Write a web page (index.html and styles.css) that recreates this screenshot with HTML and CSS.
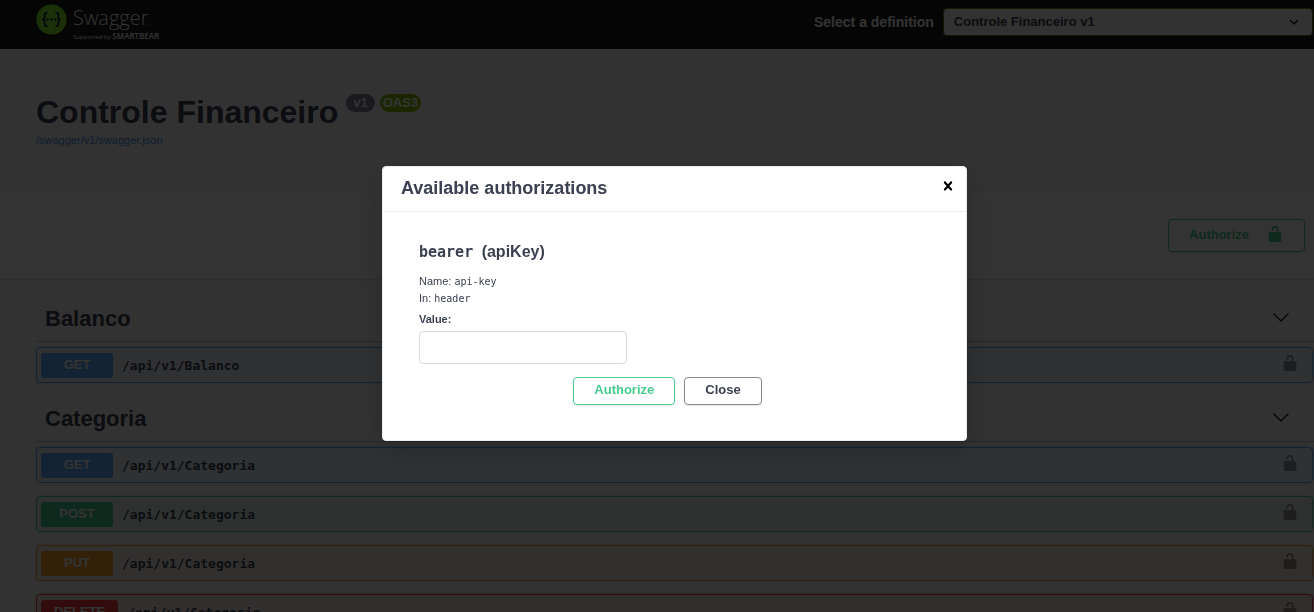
FILE: index.html
```html
<!DOCTYPE html>
<html lang="en">
<head>
<meta charset="utf-8">
<title>Swagger UI</title>
<link rel="stylesheet" href="styles.css">
</head>
<body>
<svg class="sprite" aria-hidden="true">
  <symbol id="unlocked" viewBox="0 0 20 20"><path d="M15.8 8H14V5.6C14 2.703 12.665 1 10 1 7.334 1 6 2.703 6 5.6V6h2v-.801C8 3.754 8.797 3 10 3c1.203 0 2 .754 2 2.199V8H4c-.553 0-1 .646-1 1.199V17c0 .549.428 1.139.951 1.307l1.197.387C5.672 18.861 6.55 19 7.1 19h5.8c.549 0 1.428-.139 1.951-.307l1.196-.387c.524-.167.953-.757.953-1.306V9.199C17 8.646 16.352 8 15.8 8z"/></symbol>
  <symbol id="chevron" viewBox="0 0 20 20"><path d="M17.418 6.109c.272-.268.709-.268.979 0s.271.701 0 .969l-7.908 7.83c-.27.268-.707.268-.979 0l-7.908-7.83c-.27-.268-.27-.701 0-.969.271-.268.709-.268.979 0L10 13.25z"/></symbol>
  <symbol id="arrow" viewBox="0 0 20 20"><path d="M13.418 7.859c.271-.268.709-.268.978 0 .27.268.272.701 0 .969l-3.908 3.83c-.27.268-.707.268-.979 0l-3.908-3.83c-.27-.267-.27-.701 0-.969.271-.268.709-.268.978 0L10 11z"/></symbol>
  <symbol id="close" viewBox="0 0 20 20"><path d="M14.348 14.849c-.469.469-1.229.469-1.697 0L10 11.819l-2.651 3.029c-.469.469-1.229.469-1.697 0-.469-.469-.469-1.229 0-1.697l2.758-3.15-2.759-3.152c-.469-.469-.469-1.228 0-1.697.469-.469 1.228-.469 1.697 0L10 8.183l2.651-3.031c.469-.469 1.228-.469 1.697 0 .469.469.469 1.229 0 1.697l-2.758 3.152 2.758 3.15c.469.469.469 1.229 0 1.698z"/></symbol>
</svg>

<header class="topbar">
  <a class="logo" href="#">
    <svg class="logo-mark" viewBox="0 0 32 32" aria-hidden="true">
      <circle cx="16" cy="16" r="15.6" fill="#85ea2d"/>
      <g fill="none" stroke="#173647" stroke-width="1.9">
        <path d="M12 8.9c-2.300 0-3.100.6-3.100 2.400v2c0 1.800-.7 2.700-2.500 2.700 1.800 0 2.500.9 2.500 2.700v2c0 1.800.8 2.400 3.100 2.400"/>
        <path d="M20 8.900c2.300 0 3.100.6 3.100 2.400v2c0 1.800.7 2.700 2.500 2.700-1.800 0-2.500.9-2.500 2.700v2c0 1.800-.8 2.400-3.100 2.400"/>
      </g>
      <g fill="#173647"><circle cx="12" cy="16" r="1.300"/><circle cx="16" cy="16" r="1.300"/><circle cx="20" cy="16" r="1.300"/></g>
    </svg>
    <span class="logo-text">
      <span class="logo-name">Swagger<span class="logo-dot">.</span></span>
      <span class="logo-sub">Supported by <b>SMARTBEAR</b></span>
    </span>
  </a>
  <div class="definition">
    <label for="definition">Select a definition</label>
    <div class="select-wrap">
      <select id="definition"><option>Controle Financeiro v1</option></select>
      <svg class="select-arrow" aria-hidden="true"><use href="#arrow"/></svg>
    </div>
  </div>
</header>

<main>
  <section class="info">
    <div class="title-row">
      <h1>Controle Financeiro</h1>
      <div class="badges">
        <span class="badge">v1</span>
        <span class="badge badge-oas">OAS3</span>
      </div>
    </div>
    <a class="spec-link" href="#">/swagger/v1/swagger.json</a>
  </section>

  <section class="schemes">
    <button class="btn btn-authorize btn-main" type="button">Authorize <svg class="icon" aria-hidden="true"><use href="#unlocked"/></svg></button>
  </section>

  <div class="tags">
    <section class="tag">
      <h2>Balanco <svg class="icon" aria-hidden="true"><use href="#chevron"/></svg></h2>
      <div class="operations">
        <div class="op get"><span class="method">GET</span><span class="path">/api/v1/Balanco</span><button class="lock" type="button" aria-label="Authorization"><svg class="icon"><use href="#unlocked"/></svg></button></div>
      </div>
    </section>
    <section class="tag">
      <h2>Categoria <svg class="icon" aria-hidden="true"><use href="#chevron"/></svg></h2>
      <div class="operations">
        <div class="op get"><span class="method">GET</span><span class="path">/api/v1/Categoria</span><button class="lock" type="button" aria-label="Authorization"><svg class="icon"><use href="#unlocked"/></svg></button></div>
        <div class="op post"><span class="method">POST</span><span class="path">/api/v1/Categoria</span><button class="lock" type="button" aria-label="Authorization"><svg class="icon"><use href="#unlocked"/></svg></button></div>
        <div class="op put"><span class="method">PUT</span><span class="path">/api/v1/Categoria</span><button class="lock" type="button" aria-label="Authorization"><svg class="icon"><use href="#unlocked"/></svg></button></div>
        <div class="op delete"><span class="method">DELETE</span><span class="path">/api/v1/Categoria</span><button class="lock" type="button" aria-label="Authorization"><svg class="icon"><use href="#unlocked"/></svg></button></div>
      </div>
    </section>
  </div>
</main>

<div class="backdrop">
  <div class="modal" role="dialog" aria-modal="true" aria-labelledby="modal-title">
    <div class="modal-header">
      <h3 id="modal-title">Available authorizations</h3>
      <button class="modal-close" type="button" aria-label="Close dialog"><svg class="icon"><use href="#close"/></svg></button>
    </div>
    <form class="modal-body">
      <h4><code>bearer</code> (apiKey)</h4>
      <p>Name: <code>api-key</code></p>
      <p>In: <code>header</code></p>
      <label for="api-key">Value:</label>
      <input id="api-key" type="text">
      <div class="actions">
        <button class="btn btn-authorize" type="button">Authorize</button>
        <button class="btn" type="button">Close</button>
      </div>
    </form>
  </div>
</div>
</body>
</html>
```

FILE: styles.css
```css
* { box-sizing: border-box; }

body {
  margin: 0;
  overflow: hidden;
  background: #fafafa;
  color: #3b4151;
  font-family: "Liberation Sans", Arial, sans-serif;
}

h1, h2, h3, h4, p { margin: 0; }
a { text-decoration: none; }
button { font-family: inherit; cursor: pointer; }
code, .path { font-family: "DejaVu Sans Mono", monospace; }

.sprite { display: none; }
.icon { display: block; width: 18px; height: 18px; fill: currentColor; }

/* Top bar */
.topbar {
  display: flex;
  align-items: flex-start;
  justify-content: space-between;
  height: 49px;
  padding: 4px 1px 0 36px;
  background: #1b1b1b;
  color: #fff;
}
.logo { display: flex; gap: 6px; color: #fff; font-family: "Open Sans", sans-serif; }
.logo-mark { width: 31px; height: 31px; }
.logo-text { display: flex; flex-direction: column; padding-top: 3px; }
.logo-name { font-size: 20px; line-height: 22px; font-weight: 300; }
.logo-dot { font-size: 10px; }
.logo-sub { font-size: 6px; line-height: 8px; white-space: nowrap; }
.logo-sub b { font-size: 8px; font-weight: 600; }

.definition { display: flex; align-items: center; gap: 9px; width: 499px; padding-top: 4px; }
.definition label { flex: none; font-size: 14px; font-weight: 700; }
.select-wrap { position: relative; flex: 1; }
.definition select {
  display: block;
  width: 100%;
  height: 28px;
  padding: 0 36px 2px 10px;
  appearance: none;
  border: 1px solid #547f00;
  border-radius: 4px;
  background: #f7f7f7;
  color: #3b4151;
  font: 700 13px "Liberation Sans", Arial, sans-serif;
}
.select-arrow { position: absolute; top: 5px; right: 10px; width: 18px; height: 18px; pointer-events: none; }

/* API info */
.info { padding: 45px 0 45px 36px; }
.title-row { display: flex; align-items: flex-start; gap: 8px; }
h1 { font-size: 32px; line-height: 36px; }
.badges { display: flex; gap: 5px; }
.badge {
  height: 18px;
  padding: 0 7px;
  border-radius: 9px;
  background: #7d8492;
  color: #fff;
  font-size: 13px;
  line-height: 17px;
  font-weight: 700;
}
.badge-oas { padding: 0 3px; background: #89bf04; }
.spec-link { display: block; padding-top: 3px; color: #4990e2; font-size: 11px; line-height: 14px; }

.schemes {
  display: flex;
  justify-content: flex-end;
  padding: 27px 9px;
  background: #fff;
  box-shadow: 0 1px 2px rgba(0, 0, 0, .15);
}

.btn {
  height: 28px;
  padding: 0 20px 3px;
  border: 1px solid #888;
  border-radius: 4px;
  background: transparent;
  box-shadow: 0 1px 2px rgba(0, 0, 0, .1);
  color: #3b4151;
  font-size: 13px;
  font-weight: 700;
}
.btn-authorize { border-color: #49cc90; color: #49cc90; }
.btn-main { display: flex; align-items: center; gap: 17px; height: 33px; }

/* Operations */
.tags { padding: 17px 0 0 36px; }
.tag { padding-bottom: 13px; }
.tag h2 {
  display: flex;
  align-items: center;
  justify-content: space-between;
  height: 46px;
  padding: 0 24px 0 9px;
  border-bottom: 1px solid rgba(59, 65, 81, .3);
  font-size: 22px;
}
.tag h2 .icon { margin-bottom: 4px; color: #000; }
.operations { display: flex; flex-direction: column; gap: 13px; padding-top: 5px; }
.op {
  display: flex;
  align-items: center;
  height: 36px;
  margin-right: 1px;
  padding: 0 13px 0 4px;
  border: 1px solid var(--accent);
  border-radius: 4px;
  background: var(--tint);
  box-shadow: 0 0 3px rgba(0, 0, 0, .19);
}
.get { --accent: #61affe; --tint: rgba(97, 175, 254, .1); }
.post { --accent: #49cc90; --tint: rgba(73, 204, 144, .1); }
.put { --accent: #fca130; --tint: rgba(252, 161, 48, .1); }
.delete { --accent: #f93e3e; --tint: rgba(249, 62, 62, .1); }
.method {
  min-width: 72px;
  padding: 0 13px 2px;
  border-radius: 3px;
  background: var(--accent);
  color: #fff;
  font-size: 13px;
  line-height: 23px;
  font-weight: 700;
  text-align: center;
  text-shadow: 0 1px 0 rgba(0, 0, 0, .1);
}
.path { flex: 1; padding-left: 9px; font-size: 13px; font-weight: 700; }
.lock { padding: 0 0 4px; border: 0; background: none; color: #000; opacity: .4; }

/* Authorization dialog */
.backdrop {
  position: fixed;
  inset: 0;
  display: flex;
  align-items: center;
  justify-content: center;
  padding: 0 0 5px 35px;
  background: rgba(0, 0, 0, .8);
}
.modal {
  width: 100%;
  max-width: 585px;
  border: 1px solid #ebebeb;
  border-radius: 4px;
  background: #fff;
  box-shadow: 0 10px 30px rgba(0, 0, 0, .2);
}
.modal-header {
  display: flex;
  align-items: center;
  justify-content: space-between;
  height: 45px;
  padding: 0 9px 1px 18px;
  border-bottom: 1px solid #ebebeb;
}
.modal-header h3 { font-size: 18px; }
.modal-close { padding: 0 0 5px; border: 0; background: none; color: #000; }
.modal-body { padding: 28px 36px 35px; font-size: 11px; }
.modal-body h4 { padding-bottom: 9px; font-size: 16px; line-height: 24px; }
.modal-body h4 code { margin-right: 4px; font-size: 15px; }
.modal-body p { line-height: 17px; }
.modal-body p code { font-size: 10px; }
.modal-body label { display: block; padding: 4px 0 3px; font-weight: 700; line-height: 17px; }
.modal-body input {
  display: block;
  width: 208px;
  height: 33px;
  padding: 0 9px;
  border: 1px solid #d9d9d9;
  border-radius: 4px;
  background: #fff;
}
.actions { display: flex; justify-content: center; gap: 9px; padding: 13px 14px 0 0; }
```
